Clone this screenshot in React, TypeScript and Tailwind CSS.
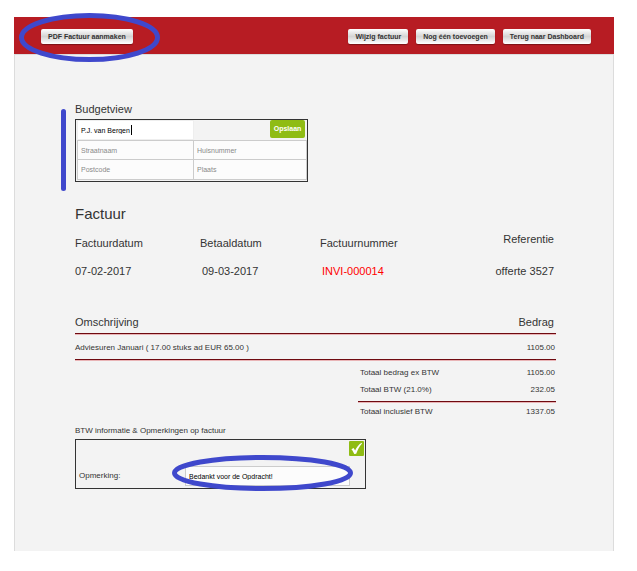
import React from "react";

const barButton =
  "h-[15px] rounded-[2px] bg-linear-to-b from-white via-[#d4d4d4] to-white px-[7px] text-[7px] leading-[15px] font-bold whitespace-nowrap text-[#333] shadow-[0_1px_1px_#7a1216]";
const addressField =
  "block h-full w-full border border-[#ccc] bg-[#fcfcfc] px-[3px] text-[7px] text-black outline-none placeholder:text-[#8a8a8a]";
const rule = "border-b border-[#6e0a10] shadow-[0_1px_0_#e9b4b6]";

function Ring({ className, width, height }: { className: string; width: number; height: number }) {
  return (
    <svg
      className={`pointer-events-none absolute ${className}`}
      width={width}
      height={height}
      viewBox={`0 0 ${width} ${height}`}
      fill="none"
      aria-hidden="true"
    >
      <ellipse
        cx={width / 2}
        cy={height / 2}
        rx={width / 2 - 2.5}
        ry={height / 2 - 2.5}
        stroke="#3f48cc"
        strokeWidth="5"
      />
    </svg>
  );
}

function Toolbar() {
  return (
    <header className="flex h-[37px] items-center justify-between bg-[#b71c23] pt-[2px] pr-[23px] pl-[27px]">
      <div className="relative flex">
        <button type="button" className={barButton}>
          PDF Factuur aanmaken
        </button>
        <Ring className="top-[-16px] left-[-22px] max-w-none" width={141} height={49} />
      </div>
      <div className="flex gap-2">
        <button type="button" className={barButton}>Wijzig factuur</button>
        <button type="button" className={barButton}>Nog één toevoegen</button>
        <button type="button" className={barButton}>Terug naar Dashboard</button>
      </div>
    </header>
  );
}

function AddressForm() {
  return (
    <section className="relative w-[233px]">
      <h2 className="mb-[2px] text-[11px] leading-4">Budgetview</h2>
      <form className="border border-[#333] pb-px pl-px">
        <div className="flex h-5 items-start justify-between">
          <div className="relative h-full w-[117px]">
            <input
              aria-label="Naam"
              defaultValue="P.J. van Bergen"
              className="block h-full w-full border border-[#eee] bg-white px-[3px] text-[7px] text-black outline-none"
            />
            <span className="absolute top-[5px] left-[54px] h-[10px] w-px bg-black" />
          </div>
          <button
            type="button"
            className="mr-[2px] h-[18px] w-[35px] rounded-[2px] bg-[#8fbc14] text-[7px] font-bold text-white"
          >
            Opslaan
          </button>
        </div>
        <div className="grid grid-cols-[117px_1fr] grid-rows-[20px_20px]">
          <input aria-label="Straatnaam" placeholder="Straatnaam" className={addressField} />
          <input aria-label="Huisnummer" placeholder="Huisnummer" className={`${addressField} border-l-0`} />
          <input aria-label="Postcode" placeholder="Postcode" className={`${addressField} border-t-0`} />
          <input aria-label="Plaats" placeholder="Plaats" className={`${addressField} border-t-0 border-l-0`} />
        </div>
      </form>
      <div className="absolute top-[8px] left-[-14px] h-[82px] w-[5px] rounded-full bg-[#3f48cc]" />
    </section>
  );
}

function InvoiceDetails() {
  return (
    <section className="mt-[22px]">
      <h1 className="mb-[7px] text-[15px] leading-5">Factuur</h1>
      <table className="w-full table-fixed text-left text-[11px] leading-4">
        <thead>
          <tr className="h-5">
            <th className="w-[125px] align-bottom font-normal">Factuurdatum</th>
            <th className="w-[120px] align-bottom font-normal">Betaaldatum</th>
            <th className="align-bottom font-normal">Factuurnummer</th>
            <th className="pr-[2px] text-right align-top font-normal">Referentie</th>
          </tr>
        </thead>
        <tbody>
          <tr>
            <td className="pt-3">07-02-2017</td>
            <td className="pt-3 pl-[2px]">09-03-2017</td>
            <td className="pt-3 pl-[2px] text-[#f00]">INVI-000014</td>
            <td className="pt-3 pr-[2px] text-right">offerte 3527</td>
          </tr>
        </tbody>
      </table>
    </section>
  );
}

function InvoiceLines() {
  return (
    <table className="mt-[35px] w-full table-fixed border-separate border-spacing-0 text-left text-[8px] leading-[17px]">
      <colgroup>
        <col className="w-[283px]" />
        <col />
        <col className="w-[60px]" />
      </colgroup>
      <thead>
        <tr className="text-[11px] leading-4">
          <th colSpan={2} className={`pb-[3px] font-normal ${rule}`}>Omschrijving</th>
          <th className={`pr-[2px] pb-[3px] text-right font-normal ${rule}`}>Bedrag</th>
        </tr>
      </thead>
      <tbody>
        <tr className="h-[26px]">
          <td colSpan={2} className={`pt-px ${rule}`}>Adviesuren Januari ( 17.00 stuks ad EUR 65.00 )</td>
          <td className={`pt-px pr-px text-right ${rule}`}>1105.00</td>
        </tr>
      </tbody>
      <tfoot>
        <tr>
          <td />
          <td className="pt-1 pl-[2px]">Totaal bedrag ex BTW</td>
          <td className="pt-1 pr-px text-right">1105.00</td>
        </tr>
        <tr>
          <td />
          <td className={`pb-[3px] pl-[2px] ${rule}`}>Totaal BTW (21.0%)</td>
          <td className={`pr-px pb-[3px] text-right ${rule}`}>232.05</td>
        </tr>
        <tr>
          <td />
          <td className="pt-px pl-[2px]">Totaal inclusief BTW</td>
          <td className="pt-px pr-px text-right">1337.05</td>
        </tr>
      </tfoot>
    </table>
  );
}

function Remarks() {
  return (
    <section className="mt-[3px] w-[291px] text-[8px]">
      <h2 className="leading-4">BTW informatie &amp; Opmerkingen op factuur</h2>
      <form className="border border-[#333] pb-[2px]">
        <div className="flex justify-end pt-px pr-px">
          <button
            type="button"
            aria-label="Opslaan"
            className="flex size-[15px] items-center justify-center rounded-[1px] bg-[#8fbc14]"
          >
            <svg width="15" height="15" viewBox="0 0 15 15" aria-hidden="true">
              <path d="M2.4 8.2 4.6 6.9 6.1 9.6C7.6 6.4 9.5 3.8 12.6 1.8L13 2.4C10.4 5.2 8.6 8.6 7.2 12.8L5.2 13C4.5 11 3.6 9.6 2.4 8.2Z" fill="#fff" />
            </svg>
          </button>
        </div>
        <div className="mt-[10px] flex h-5 items-center pr-[15px] pl-[3px]">
          <label htmlFor="opmerking" className="w-[106px]">Opmerking:</label>
          <div className="relative h-full flex-1">
            <input
              id="opmerking"
              defaultValue="Bedankt voor de Opdracht!"
              className="block h-full w-full border border-[#ccc] bg-[#fcfcfc] px-[3px] text-[7px] text-black outline-none"
            />
            <Ring className="top-[-11px] left-[-13px] max-w-none" width={181} height={36} />
          </div>
        </div>
      </form>
    </section>
  );
}

export default function App() {
  return (
    <div className="bg-white pt-[17px] pr-[23px] pb-5 pl-[14px] font-['Liberation_Sans',Arial,sans-serif] text-[#333]">
      <Toolbar />
      <main className="border border-b-0 border-[#dcdcdc] bg-[#f3f3f3] pt-[46px] pr-[57px] pb-[62px] pl-[60px]">
        <AddressForm />
        <InvoiceDetails />
        <InvoiceLines />
        <Remarks />
      </main>
    </div>
  );
}
